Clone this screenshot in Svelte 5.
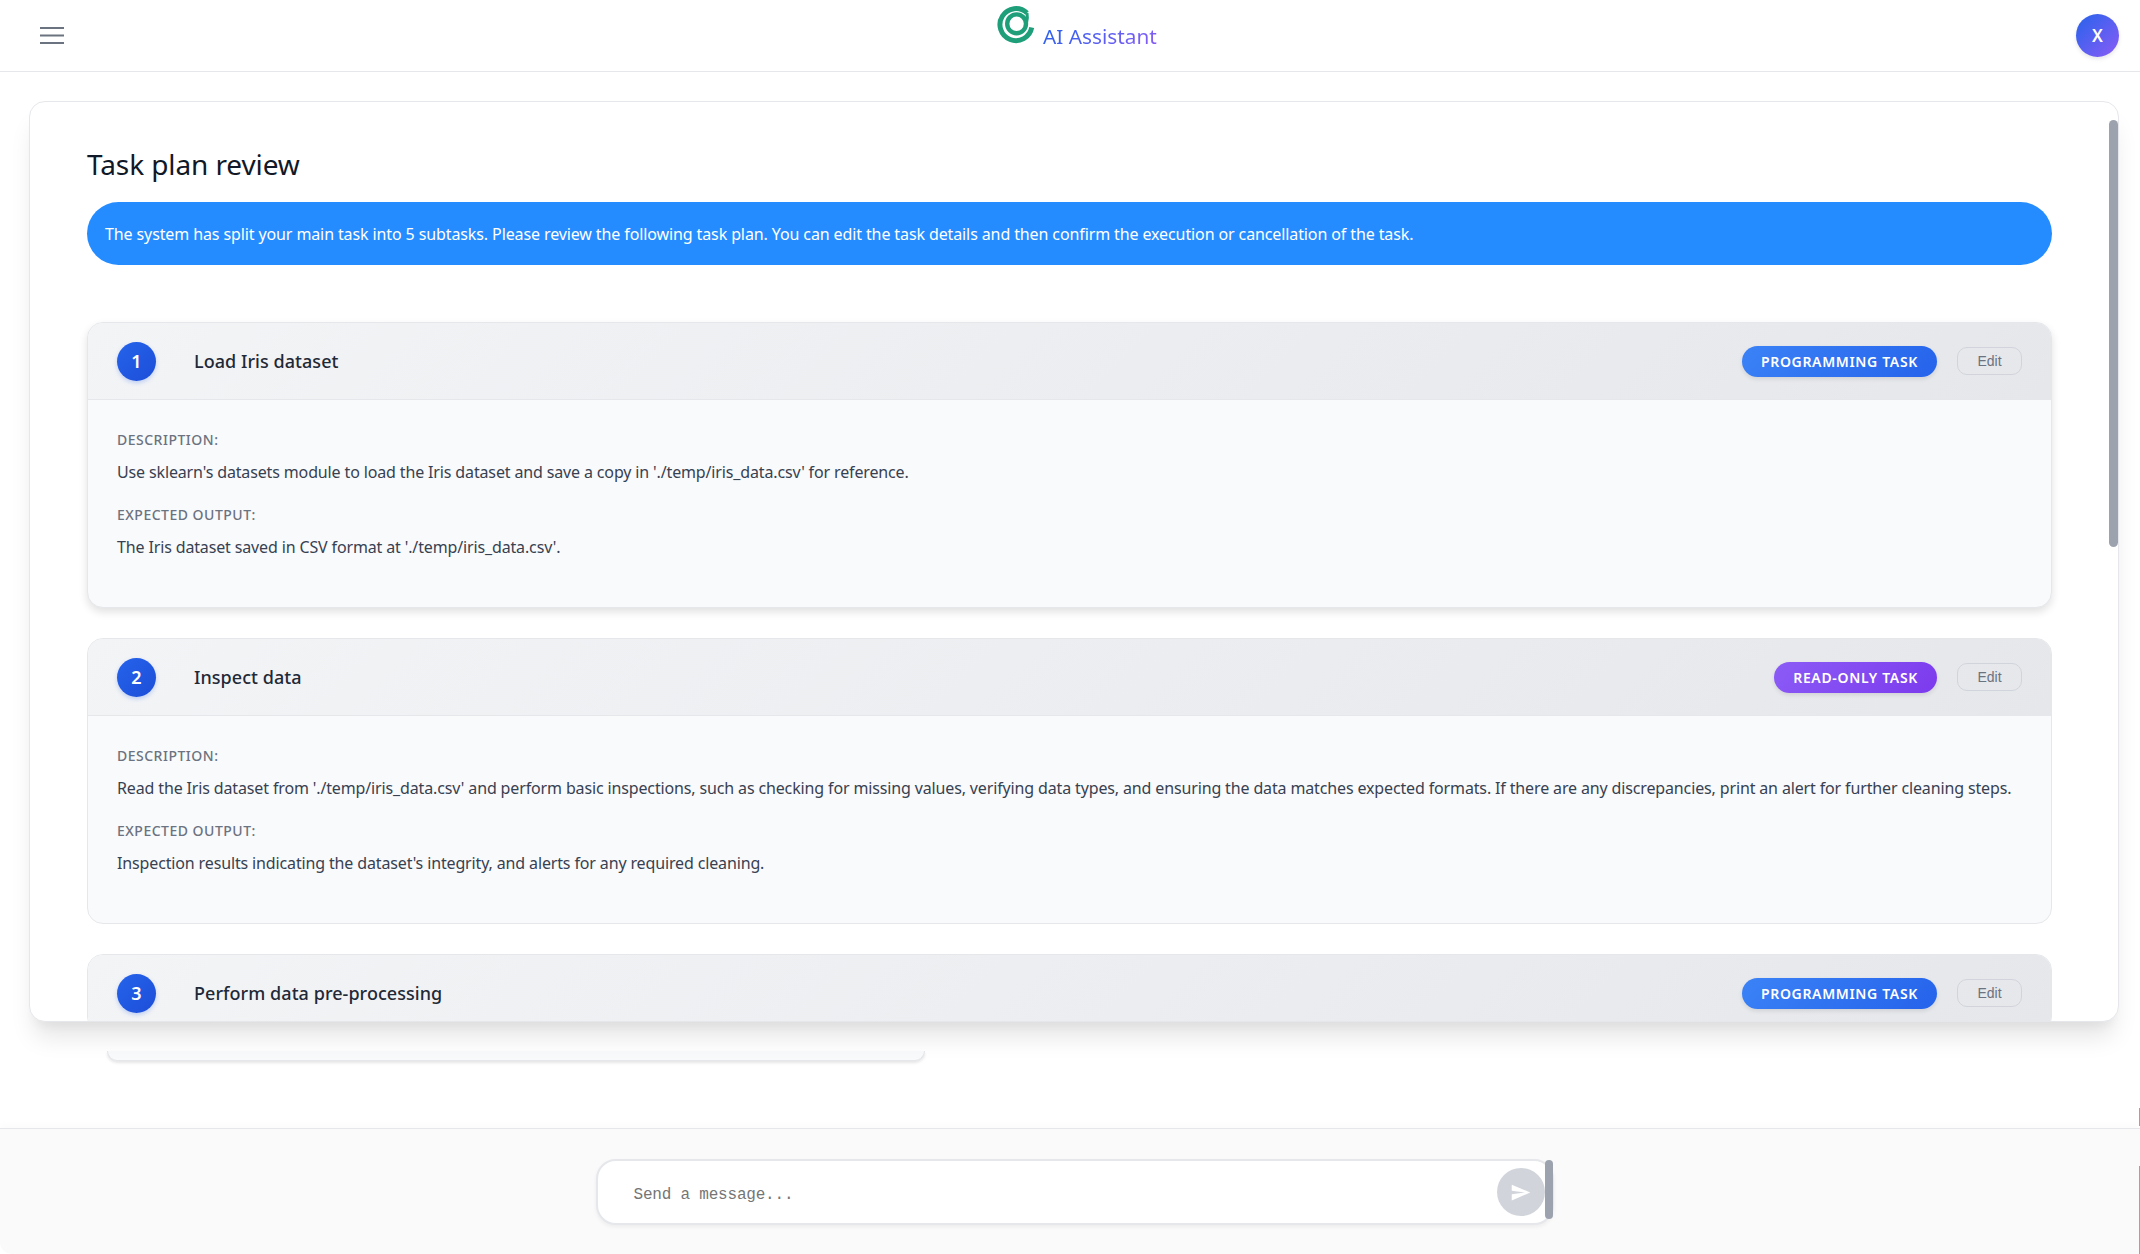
<script>
  const tasks = [
    { n: 1, title: 'Load Iris dataset', kind: 'PROGRAMMING TASK', cls: 'prog', lift: true,
      desc: "Use sklearn's datasets module to load the Iris dataset and save a copy in './temp/iris_data.csv' for reference.",
      out: "The Iris dataset saved in CSV format at './temp/iris_data.csv'." },
    { n: 2, title: 'Inspect data', kind: 'READ-ONLY TASK', cls: 'read',
      desc: "Read the Iris dataset from './temp/iris_data.csv' and perform basic inspections, such as checking for missing values, verifying data types, and ensuring the data matches expected formats. If there are any discrepancies, print an alert for further cleaning steps.",
      out: "Inspection results indicating the dataset's integrity, and alerts for any required cleaning." },
    { n: 3, title: 'Perform data pre-processing', kind: 'PROGRAMMING TASK', cls: 'prog' }
  ];
</script>

<div class="page">
  <header class="top">
    <button class="menu" aria-label="Menu">
      <svg width="24" height="24" viewBox="0 0 24 24" fill="none" stroke="#6b7280" stroke-width="2.2"><path d="M0 4h24M0 11.5h24M0 19h24"/></svg>
    </button>
    <div class="brand">
      <svg class="logo" width="38" height="38" viewBox="0 0 38 38" fill="none" stroke="#1f9e7a">
        <path d="M34.7 21.5A16 16 0 1 1 30 7" stroke-width="5"/>
        <path d="M30 7Q31 12 29.5 17" stroke-width="3"/>
        <circle cx="19.6" cy="17.8" r="9.4" stroke-width="4.4"/>
      </svg>
      <span class="name">AI Assistant</span>
    </div>
    <div class="avatar">X</div>
  </header>

  <main class="main">
    <section class="card">
      <div class="scroller">
        <h2>Task plan review</h2>
        <div class="notice">The system has split your main task into 5 subtasks. Please review the following task plan. You can edit the task details and then confirm the execution or cancellation of the task.</div>
        <div class="list">
          {#each tasks as t}
            <article class="task" class:lift={t.lift}>
              <div class="head">
                <span class="num">{t.n}</span>
                <span class="title">{t.title}</span>
                <span class="badge {t.cls}">{t.kind}</span>
                <button class="edit">Edit</button>
              </div>
              {#if t.desc}
                <div class="body">
                  <div class="label">DESCRIPTION:</div>
                  <p>{t.desc}</p>
                  <div class="label second">EXPECTED OUTPUT:</div>
                  <p>{t.out}</p>
                </div>
              {/if}
            </article>
          {/each}
        </div>
      </div>
      <div class="thumb"></div>
    </section>
    <div class="peek"></div>
  </main>

  <footer class="foot">
    <div class="input">
      <span class="placeholder">Send a message...</span>
      <span class="send">
        <svg width="21" height="21" viewBox="0 0 24 24"><path d="M2.01 21 23 12 2.01 3 2 10l15 2-15 2z" fill="#fff"/></svg>
      </span>
      <span class="ithumb"></span>
    </div>
    <span class="edge a"></span>
    <span class="edge b"></span>
  </footer>
</div>

<style>
  :global(body) { margin: 0; background: #fff; }
  .page {
    height: 1254px; display: flex; flex-direction: column; overflow: hidden; position: relative;
    font-family: "Noto Sans", "Open Sans", sans-serif; color: #111827;
  }
  .top {
    height: 71px; flex: none; border-bottom: 1px solid #e5e7eb; background: #fff; border-top-left-radius: 12px;
    display: flex; align-items: center; justify-content: space-between; padding: 0 21px 0 40px; position: relative;
  }
  .menu { border: 0; background: none; padding: 0; width: 24px; height: 24px; display: block; }
  .menu svg { display: block; }
  .brand { position: absolute; left: 997px; top: 6px; display: flex; align-items: flex-start; }
  .logo { display: block; }
  .name {
    font-size: 20.8px; line-height: 28px; margin: 16px 0 0 8px;
    background: linear-gradient(135deg, #2563eb, #8b5cf6); -webkit-background-clip: text; background-clip: text; color: transparent;
  }
  .avatar {
    width: 43px; height: 43px; border-radius: 50%; background: linear-gradient(135deg, #2563eb, #8b5cf6);
    color: #fff; font-weight: 600; font-size: 17px; display: flex; align-items: center; justify-content: center;
    box-shadow: 0 2px 4px rgba(0,0,0,.1);
  }
  .main { flex: 1; padding: 29px 21px 0 29px; background: #fff; }
  .card {
    height: 921px; box-sizing: border-box; border: 1px solid #e5e7eb; border-radius: 16px; background: #fff; position: relative; z-index: 2;
    box-shadow: 0 20px 25px -5px rgba(0,0,0,.1), 0 10px 10px -5px rgba(0,0,0,.04); overflow: hidden;
  }
  .scroller { padding: 42px 66px 0 57px; }
  h2 { margin: 0 0 18px; font-size: 28px; line-height: 40px; font-weight: 400; letter-spacing: -0.1px; }
  .notice {
    background: #258cff; color: #fff; border-radius: 32px; height: 63px; display: flex; align-items: center;
    padding: 0 18px; font-size: 16px; letter-spacing: -0.11px;
  }
  .list { margin-top: 57px; display: flex; flex-direction: column; gap: 30px; }
  .task { border: 1px solid #e5e7eb; border-radius: 16px; background: #f9fafb; overflow: hidden; }
  .task.lift { box-shadow: 0 4px 8px rgba(0,0,0,.12); }
  .head {
    height: 77px; box-sizing: border-box; display: flex; align-items: center; padding: 0 29px;
    background: linear-gradient(135deg, #f3f4f6, #e5e7eb); border-bottom: 1px solid #e5e7eb;
  }
  .num {
    width: 39px; height: 39px; border-radius: 50%; background: linear-gradient(135deg, #2563eb, #1d4ed8); color: #fff; flex: none;
    display: flex; align-items: center; justify-content: center; font-weight: 600; font-size: 18px;
    box-shadow: 0 2px 4px rgba(37,99,235,.25);
  }
  .title { margin-left: 38px; flex: 1; font-size: 18px; font-weight: 500; letter-spacing: .05px; color: #1f2937; }
  .badge {
    height: 31px; border-radius: 16px; padding: 0 19px; display: flex; align-items: center; color: #fff;
    font-weight: 600; font-size: 14px; letter-spacing: .66px; box-shadow: 0 2px 4px rgba(0,0,0,.1);
  }
  .prog { background: linear-gradient(135deg, #3b82f6, #2563eb); }
  .read { background: linear-gradient(135deg, #8b5cf6, #7c3aed); }
  .edit {
    margin-left: 20px; width: 65px; height: 28px; border: 1px solid #d1d5db; border-radius: 10px; background: transparent;
    color: #6b7280; font-family: "Liberation Sans", sans-serif; font-size: 14px; padding: 0;
  }
  .body { padding: 30px 29px 0; height: 207px; box-sizing: border-box; }
  .label { font-size: 14px; line-height: 20px; color: #6b7280; font-weight: 500; letter-spacing: .5px; }
  .label.second { margin-top: 20px; }
  p { margin: 9px 0 0; font-size: 16px; line-height: 26px; color: #374151; letter-spacing: -0.14px; white-space: nowrap; }
  .thumb { position: absolute; right: 0; top: 18px; width: 9px; height: 427px; border-radius: 4.5px; background: #9ca3af; }
  .peek {
    margin: 29px 0 0 78px; width: 818px; height: 10px; box-sizing: border-box; position: relative; z-index: 1;
    background: #f9fafb; border: 1px solid #e5e7eb; border-top: 0; border-radius: 0 0 14px 14px; box-shadow: 0 2px 3px rgba(0,0,0,.1);
  }
  .foot {
    height: 126px; flex: none; background: #fafafa; border-top: 1px solid #e5e7eb; display: flex; justify-content: center; padding: 30px 0 0 9px; box-sizing: border-box;
    box-shadow: 0 -4px 6px rgba(0,0,0,.015); border-bottom-left-radius: 12px; position: relative;
  }
  .input {
    width: 958px; height: 66px; box-sizing: border-box; background: #fff; border: 2px solid #e5e7eb; border-radius: 20px; position: relative;
    box-shadow: 0 2px 4px rgba(0,0,0,.06);
  }
  .placeholder { position: absolute; left: 36px; top: 20px; font-family: "Liberation Mono", monospace; font-size: 16px; line-height: 28px; letter-spacing: -0.2px; color: #757575; }
  .send {
    position: absolute; right: 7px; top: 7px; width: 48px; height: 48px; border-radius: 50%; background: #d1d5db;
    display: flex; align-items: center; justify-content: center;
  }
  .send svg { display: block; }
  .ithumb { position: absolute; right: -1px; top: -1px; width: 8px; height: 59px; border-radius: 4px; background: #9ca3af; }
  .edge { position: absolute; right: 0; width: 1px; background: #9ca3af; }
  .edge.a { top: -21px; height: 18px; }
  .edge.b { top: 37px; bottom: 0; }
</style>
